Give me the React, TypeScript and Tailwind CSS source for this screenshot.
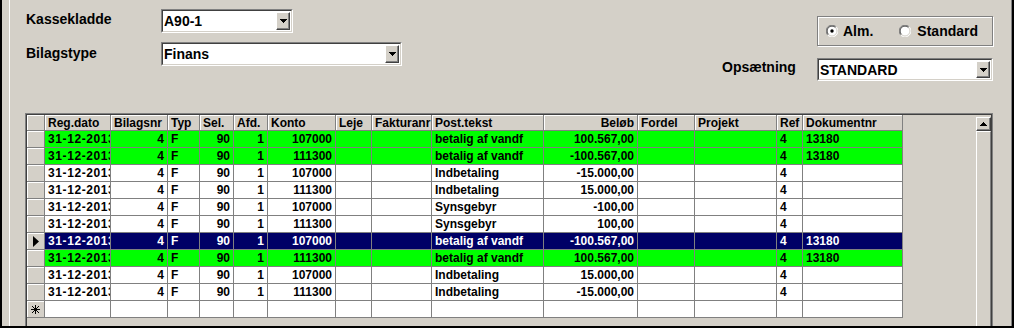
import React from "react";

type Row = {
  color: "green" | "white" | "navy";
  konto: string;
  tekst: string;
  belob: string;
  dok: string;
  current?: boolean;
};

const rows: Row[] = [
  { color: "green", konto: "107000", tekst: "betalig af vandf", belob: "100.567,00", dok: "13180" },
  { color: "green", konto: "111300", tekst: "betalig af vandf", belob: "-100.567,00", dok: "13180" },
  { color: "white", konto: "107000", tekst: "Indbetaling", belob: "-15.000,00", dok: "" },
  { color: "white", konto: "111300", tekst: "Indbetaling", belob: "15.000,00", dok: "" },
  { color: "white", konto: "107000", tekst: "Synsgebyr", belob: "-100,00", dok: "" },
  { color: "white", konto: "111300", tekst: "Synsgebyr", belob: "100,00", dok: "" },
  { color: "navy", konto: "107000", tekst: "betalig af vandf", belob: "-100.567,00", dok: "13180", current: true },
  { color: "green", konto: "111300", tekst: "betalig af vandf", belob: "100.567,00", dok: "13180" },
  { color: "white", konto: "107000", tekst: "Indbetaling", belob: "15.000,00", dok: "" },
  { color: "white", konto: "111300", tekst: "Indbetaling", belob: "-15.000,00", dok: "" },
];

interface Col {
  key: string;
  label: string;
  width: string;
  right?: boolean;
  headRight?: boolean;
  extra?: string;
}

const cols: Col[] = [
  { key: "date", label: "Reg.dato", width: "w-[66px]", extra: "tracking-[0.6px]" },
  { key: "bilag", label: "Bilagsnr", width: "w-[57px]", right: true },
  { key: "typ", label: "Typ", width: "w-[32px]" },
  { key: "sel", label: "Sel.", width: "w-[34px]", right: true },
  { key: "afd", label: "Afd.", width: "w-[34px]", right: true },
  { key: "konto", label: "Konto", width: "w-[68px]", right: true },
  { key: "leje", label: "Leje", width: "w-[36px]" },
  { key: "faktura", label: "Fakturanr", width: "w-[60px]" },
  { key: "tekst", label: "Post.tekst", width: "w-[112px]" },
  { key: "belob", label: "Beløb", width: "w-[94px]", right: true, headRight: true },
  { key: "fordel", label: "Fordel", width: "w-[57px]" },
  { key: "projekt", label: "Projekt", width: "w-[82px]" },
  { key: "ref", label: "Ref", width: "w-[26px]" },
  { key: "dok", label: "Dokumentnr", width: "w-[100px]" },
];

const rowColors = {
  green: "bg-[#00ff00] text-black",
  white: "bg-white text-black",
  navy: "bg-[#000066] text-white",
};

function cellValue(row: Row, key: string): string {
  switch (key) {
    case "date":
      return "31-12-2013";
    case "bilag":
      return "4";
    case "typ":
      return "F";
    case "sel":
      return "90";
    case "afd":
      return "1";
    case "konto":
      return row.konto;
    case "tekst":
      return row.tekst;
    case "belob":
      return row.belob;
    case "ref":
      return "4";
    case "dok":
      return row.dok;
    default:
      return "";
  }
}

function DownArrow() {
  return (
    <svg width="7" height="4" viewBox="0 0 7 4" shapeRendering="crispEdges">
      <path d="M0 0h7v1H0zM1 1h5v1H1zM2 2h3v1H2zM3 3h1v1H3z" fill="#000" />
    </svg>
  );
}

function UpArrow() {
  return (
    <svg width="7" height="4" viewBox="0 0 7 4" shapeRendering="crispEdges">
      <path d="M3 0h1v1H3zM2 1h3v1H2zM1 2h5v1H1zM0 3h7v1H0z" fill="#000" />
    </svg>
  );
}

function ComboBox({ value, width, height }: { value: string; width: string; height: string }) {
  return (
    <div className={`${width} ${height} border border-t-[#808080] border-l-[#808080] border-r-white border-b-white`}>
      <div className="h-full flex items-center bg-white border border-t-[#404040] border-l-[#404040] border-r-[#d4d0c8] border-b-[#d4d0c8]">
        <span className="flex-1 pl-[1px] text-[14px] font-bold leading-[16px] whitespace-nowrap">{value}</span>
        <div className="w-[14px] self-stretch my-[1px] mr-[1px] flex items-center justify-center bg-[#d4d0c8] border border-t-white border-l-white border-r-[#404040] border-b-[#404040] shadow-[inset_-1px_-1px_0_#808080]">
          <DownArrow />
        </div>
      </div>
    </div>
  );
}

function Radio({ checked }: { checked?: boolean }) {
  return (
    <svg width="12" height="12" viewBox="0 0 12 12">
      <circle cx="6" cy="6" r="5.5" fill="#fff" />
      <path d="M1.8 10.2 A5.5 5.5 0 0 1 10.2 1.8" stroke="#808080" fill="none" />
      <path d="M10.2 1.8 A5.5 5.5 0 0 1 1.8 10.2" stroke="#fff" fill="none" />
      <path d="M2.5 9.5 A4.5 4.5 0 0 1 9.5 2.5" stroke="#404040" fill="none" />
      <path d="M9.5 2.5 A4.5 4.5 0 0 1 2.5 9.5" stroke="#d4d0c8" fill="none" />
      {checked && <circle cx="6" cy="6" r="1.7" fill="#000" />}
    </svg>
  );
}

function RowSelector({ current, isNew }: { current?: boolean; isNew?: boolean }) {
  return (
    <div className="w-[18px] h-full shrink-0 flex items-center justify-center bg-[#d4d0c8] border-r border-b border-[#808080] shadow-[inset_1px_1px_0_#fff]">
      {current && (
        <svg width="6" height="11" viewBox="0 0 6 11">
          <path d="M0 0L6 5.5L0 11z" fill="#000" />
        </svg>
      )}
      {isNew && (
        <svg width="9" height="9" viewBox="0 0 9 9" shapeRendering="crispEdges">
          <path d="M4.5 0v9M0 4.5h9M1 1l7 7M8 1l-7 7" stroke="#000" strokeWidth="1" />
        </svg>
      )}
    </div>
  );
}

export default function App() {
  return (
    <div className="w-[1014px] h-[328px] overflow-hidden flex bg-[#d4d0c8] border-l-2 border-b-2 border-r-2 border-black font-['Liberation_Sans',Arial,sans-serif] text-black">
      <div className="w-[7px] shrink-0" />
      <div className="w-px shrink-0 bg-white" />

      <div className="flex-1 min-w-0 flex flex-col">
        {/* top controls */}
        <div className="h-[113px] shrink-0 flex justify-between">
          <div className="pl-[16px] pt-[9px]">
            <div className="flex h-[24px] items-start">
              <span className="w-[135px] mt-[2px] text-[14px] font-bold leading-[16px]">Kassekladde</span>
              <ComboBox value="A90-1" width="w-[132px]" height="h-[24px]" />
            </div>
            <div className="flex h-[24px] mt-[9px] items-start">
              <span className="w-[135px] mt-[3px] text-[14px] font-bold leading-[16px]">Bilagstype</span>
              <ComboBox value="Finans" width="w-[241px]" height="h-[24px]" />
            </div>
          </div>

          <div className="w-[271px] mr-[18px] pt-[16px]">
            <div className="ml-[95px] w-[176px] h-[30px] flex items-center pl-[8px] border border-[#808080] shadow-[inset_1px_1px_0_#fff,1px_1px_0_#fff]">
              <Radio checked />
              <span className="ml-[5px] text-[14px] font-bold leading-[16px]">Alm.</span>
              <span className="ml-[26px] flex">
                <Radio />
              </span>
              <span className="ml-[6px] text-[14px] font-bold leading-[16px]">Standard</span>
            </div>
            <div className="flex h-[23px] mt-[12px] items-start">
              <span className="w-[95px] mt-[1px] text-[14px] font-bold leading-[16px]">Opsætning</span>
              <ComboBox value="STANDARD" width="w-[176px]" height="h-[23px]" />
            </div>
          </div>
        </div>

        {/* data grid */}
        <div className="ml-[15px] w-[968px] flex-1 min-h-0 border-t border-l border-r border-[#808080]">
          <div className="h-full flex border-t border-l border-r border-[#404040] bg-[#d4d0c8] text-[12px] font-bold">
            <div className="w-[876px] shrink-0 flex flex-col">
              <div className="flex h-[16px]">
                <RowSelector />
                {cols.map((c) => (
                  <div
                    key={c.key}
                    className={`${c.width} shrink-0 h-full px-[3px] overflow-hidden whitespace-nowrap leading-[16px] bg-[#d4d0c8] border-r border-b border-[#808080] shadow-[inset_1px_1px_0_#fff] ${c.headRight ? "text-right" : ""}`}
                  >
                    {c.label}
                  </div>
                ))}
              </div>
              {rows.map((row, i) => (
                <div key={i} className="flex h-[17px]">
                  <RowSelector current={row.current} />
                  {cols.map((c) => (
                    <div
                      key={c.key}
                      className={`${c.width} shrink-0 h-full px-[3px] overflow-hidden whitespace-nowrap leading-[16px] border-r border-b border-[#808080] ${rowColors[row.color]} ${c.right ? "text-right" : ""} ${c.extra ?? ""}`}
                    >
                      {cellValue(row, c.key)}
                    </div>
                  ))}
                </div>
              ))}
              <div className="flex h-[17px]">
                <RowSelector isNew />
                {cols.map((c) => (
                  <div key={c.key} className={`${c.width} shrink-0 h-full bg-white border-r border-b border-[#808080]`} />
                ))}
              </div>
            </div>

            <div className="flex-1" />

            <div className="w-[15px] shrink-0 flex flex-col pt-[2px]">
              <div className="h-[14px] flex items-center justify-center bg-[#d4d0c8] border border-t-white border-l-white border-r-[#404040] border-b-[#404040] shadow-[inset_-1px_-1px_0_#808080]">
                <UpArrow />
              </div>
              <div className="flex-1 bg-[#d4d0c8] border-l border-t border-white border-r border-r-[#808080]" />
            </div>
          </div>
        </div>
      </div>

      <div className="w-px shrink-0 bg-[#808080]" />
    </div>
  );
}
